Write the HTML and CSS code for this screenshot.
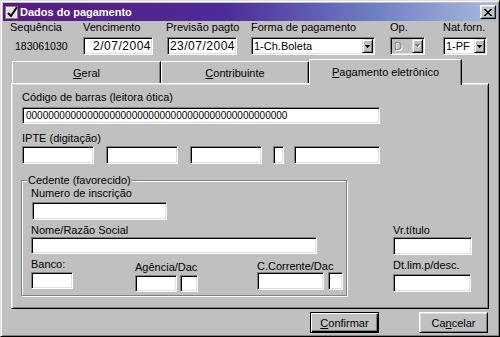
FILE: index.html
```html
<!DOCTYPE html>
<html lang="pt">
<head>
<meta charset="utf-8">
<title>Dados do pagamento</title>
<link rel="stylesheet" href="styles.css">
</head>
<body>
<div class="window">
  <div class="titlebar">
    <svg class="app-icon" viewBox="0 0 14 14" width="14" height="14"><rect x="0.5" y="1.5" width="12" height="12" fill="#fff" stroke="#808080"/><rect x="1.5" y="2.5" width="10" height="10" fill="#dfdfdf"/><path d="M3 8 L6 11 L12 2" stroke="#000" stroke-width="2" fill="none"/></svg>
    <span class="title">Dados do pagamento</span>
    <span class="close"><svg viewBox="0 0 8 7" width="8" height="7" shape-rendering="crispEdges"><path d="M0 0h2v1h-2z M6 0h2v1h-2z M1 1h2v1h-2z M5 1h2v1h-2z M2 2h4v1h-4z M3 3h2v1h-2z M2 4h4v1h-4z M1 5h2v1h-2z M5 5h2v1h-2z M0 6h2v1h-2z M6 6h2v1h-2z" fill="#000"/></svg></span>
  </div>

  <div class="header">
    <div class="hcol c-seq"><span class="lbl">Sequência</span><span class="seq">183061030</span></div>
    <div class="hcol c-venc"><span class="lbl">Vencimento</span><div class="edit date">2/07/2004</div></div>
    <div class="hcol c-prev"><span class="lbl lbl-prev">Previsão pagto</span><div class="edit date">23/07/2004</div></div>
    <div class="hcol c-forma"><span class="lbl">Forma de pagamento</span>
      <div class="combo"><span class="combo-text">1-Ch.Boleta</span><span class="drop"><svg viewBox="0 0 5 3" width="5" height="3" shape-rendering="crispEdges"><path d="M0 0h5v1h-5z M1 1h3v1h-3z M2 2h1v1h-1z" fill="#000"/></svg></span></div>
    </div>
    <div class="hcol c-op"><span class="lbl">Op.</span>
      <div class="combo disabled"><span class="combo-text">D</span><span class="drop"><svg viewBox="0 0 6 4" width="6" height="4" shape-rendering="crispEdges"><path d="M1 1h5v1h-5z M2 2h3v1h-3z M3 3h1v1h-1z" fill="#fff"/><path d="M0 0h5v1h-5z M1 1h3v1h-3z M2 2h1v1h-1z" fill="#808080"/></svg></span></div>
    </div>
    <div class="hcol c-nat"><span class="lbl">Nat.forn.</span>
      <div class="combo"><span class="combo-text">1-PF</span><span class="drop"><svg viewBox="0 0 5 3" width="5" height="3" shape-rendering="crispEdges"><path d="M0 0h5v1h-5z M1 1h3v1h-3z M2 2h1v1h-1z" fill="#000"/></svg></span></div>
    </div>
  </div>

  <div class="tabs">
    <div class="tab tab-1"><span><u>G</u>eral</span></div>
    <div class="tab tab-2"><span><u>C</u>ontribuinte</span></div>
    <div class="tab active"><span><u>P</u>agamento eletrônico</span></div>
  </div>

  <div class="panel">
    <span class="lbl lbl-code">Código de barras (leitora ótica)</span>
    <div class="edit barcode">00000000000000000000000000000000000000000000000</div>
    <span class="lbl lbl-ipte">IPTE (digitação)</span>
    <div class="ipte-row">
      <div class="edit h18 w72"></div>
      <div class="edit h18 w72 ml12"></div>
      <div class="edit h18 w72 ml12"></div>
      <div class="edit h18 w11 ml11"></div>
      <div class="edit h18 w86 ml10"></div>
    </div>

    <div class="lower">
      <div class="group">
        <span class="group-title">Cedente (favorecido)</span>
        <span class="lbl g-l1">Numero de inscrição</span>
        <div class="edit h18 w135 g-e1"></div>
        <span class="lbl g-l2">Nome/Razão Social</span>
        <div class="edit h17 w286"></div>
        <div class="brow">
          <div class="bcol banco">
            <span class="lbl">Banco:</span>
            <div class="edit h17 w42"></div>
          </div>
          <div class="bcol agencia">
            <span class="lbl">Agência/Dac</span>
            <div class="pair">
              <div class="edit h17 w42"></div>
              <div class="edit h17 w18"></div>
            </div>
          </div>
          <div class="bcol conta">
            <span class="lbl">C.Corrente/Dac</span>
            <div class="pair">
              <div class="edit h18 w67"></div>
              <div class="edit h18 w15"></div>
            </div>
          </div>
        </div>
      </div>

      <div class="right-col">
        <span class="lbl">Vr.título</span>
        <div class="edit h18 w79"></div>
        <span class="lbl r-l2">Dt.lim.p/desc.</span>
        <div class="edit h18 w78 r-e2"></div>
      </div>
    </div>
  </div>

  <div class="buttons">
    <div class="btn default"><span><u>C</u>onfirmar</span></div>
    <div class="btn"><span>Ca<u>n</u>celar</span></div>
  </div>
</div>
</body>
</html>
```
FILE: styles.css
```css
* { box-sizing: border-box; }
html, body { margin: 0; padding: 0; }
body {
  width: 500px;
  height: 337px;
  overflow: hidden;
  background: #c0c0c0;
  font-family: "Liberation Sans", Arial, sans-serif;
  font-size: 11px;
  color: #000;
}
u { text-decoration: underline; text-underline-offset: 1px; }

.window {
  width: 500px;
  height: 337px;
  background: #c0c0c0;
  border: 1px solid;
  border-color: #dfdfdf #000 #000 #dfdfdf;
  box-shadow: inset 1px 1px #fff, inset -1px -1px #808080;
  padding: 2px;
  display: flex;
  flex-direction: column;
}

/* title bar */
.titlebar {
  height: 18px;
  flex: none;
  display: flex;
  align-items: center;
  padding-left: 2px;
  padding-right: 1px;
  background: linear-gradient(90deg, #5a1a80 0%, #4c2c98 45%, #6e7ec4 75%, #a8badf 100%);
  color: #fff;
}
.app-icon { flex: none; margin-right: 1px; }
.title { flex: 1; font-weight: bold; font-size: 11px; white-space: nowrap; }
.close {
  width: 16px;
  height: 14px;
  flex: none;
  display: flex;
  align-items: center;
  justify-content: center;
  background: #c0c0c0;
  border: 1px solid;
  border-color: #fff #000 #000 #fff;
  box-shadow: inset 1px 1px #dfdfdf, inset -1px -1px #808080;
}

/* header fields */
.header {
  display: flex;
  height: 34px;
  flex: none;
  padding-left: 7px;
}
.hcol { display: flex; flex-direction: column; }
.lbl { display: block; height: 13px; line-height: 13px; white-space: nowrap; }
.c-seq { width: 73px; }
.c-venc { width: 70px; }
.c-prev { width: 70px; margin-left: 14px; }
.lbl-prev { margin-left: -1px; }
.c-forma { width: 124px; margin-left: 14px; }
.c-op { width: 35px; margin-left: 15px; }
.c-nat { width: 44px; margin-left: 18px; }
.seq {
  margin-top: 3px;
  height: 18px;
  line-height: 18px;
  padding-left: 5px;
  font-size: 10.5px;
}

.edit {
  display: flex;
  align-items: center;
  background: #fff;
  border: 1px solid;
  border-color: #808080 #fff #fff #808080;
  box-shadow: inset 1px 1px #000, inset -1px -1px #dfdfdf;
  white-space: nowrap;
  overflow: hidden;
}
.edit.date {
  margin-top: 3px;
  height: 18px;
  justify-content: flex-end;
  padding-right: 1px;
  font-size: 12px;
  letter-spacing: 0.5px;
}

.combo {
  margin-top: 3px;
  height: 18px;
  display: flex;
  align-items: center;
  padding: 1px;
  background: #fff;
  border: 1px solid;
  border-color: #808080 #fff #fff #808080;
  box-shadow: inset 1px 1px #000, inset -1px -1px #dfdfdf;
}
.combo-text { flex: 1; padding-left: 1px; font-size: 11px; white-space: nowrap; overflow: hidden; }
.drop {
  flex: none;
  width: 11px;
  height: 14px;
  display: flex;
  align-items: center;
  justify-content: center;
  background: #c0c0c0;
  border: 1px solid;
  border-color: #dfdfdf #000 #000 #dfdfdf;
  box-shadow: inset 1px 1px #fff, inset -1px -1px #808080;
}
.combo.disabled { background: #c0c0c0; }
.combo.disabled .combo-text { color: #808080; text-shadow: 1px 1px #fff; padding-left: 2px; }

/* tabs */
.tabs {
  display: flex;
  align-items: flex-end;
  height: 24px;
  flex: none;
  margin-top: 4px;
  padding-left: 9px;
}
.tab {
  height: 22px;
  display: flex;
  align-items: center;
  justify-content: center;
  border-top: 1px solid #fff;
  border-left: 1px solid #fff;
  border-right: 1px solid #000;
  box-shadow: inset -1px 0 #808080;
  white-space: nowrap;
}
.tab-1 { width: 149px; }
.tab-2 { width: 148px; }
.tab.active {
  width: 153px;
  height: 26px;
  margin-bottom: -2px;
  padding-bottom: 2px;
  position: relative;
  z-index: 2;
  background: #c0c0c0;
}

/* panel */
.panel {
  margin-left: 8px;
  width: 478px;
  height: 226px;
  flex: none;
  border: 1px solid;
  border-color: #fff #000 #000 #fff;
  box-shadow: inset 1px 1px #dfdfdf, inset -1px -1px #808080;
  padding-left: 10px;
  display: flex;
  flex-direction: column;
  align-items: flex-start;
}
.lbl-code { margin-top: 7px; }
.barcode {
  margin-top: 3px;
  width: 358px;
  height: 17px;
  padding-left: 3px;
  font-size: 10px;
}
.lbl-ipte { margin-top: 8px; }
.ipte-row { display: flex; margin-top: 1px; }

.h17 { height: 17px; }
.h18 { height: 18px; }
.w11 { width: 11px; }
.w15 { width: 15px; }
.w18 { width: 18px; }
.w42 { width: 42px; }
.w67 { width: 67px; }
.w72 { width: 72px; }
.w78 { width: 78px; }
.w79 { width: 79px; }
.w86 { width: 86px; }
.w135 { width: 135px; }
.w286 { width: 286px; }
.ml10 { margin-left: 10px; }
.ml11 { margin-left: 11px; }
.ml12 { margin-left: 12px; }

.lower { display: flex; align-items: flex-start; }
.group {
  position: relative;
  margin-top: 16px;
  margin-left: -1px;
  width: 326px;
  height: 116px;
  border: 1px solid #808080;
  box-shadow: inset 1px 1px #fff, 1px 1px #fff;
  padding-left: 9px;
  display: flex;
  flex-direction: column;
  align-items: flex-start;
}
.group-title {
  position: absolute;
  top: -7px;
  left: 5px;
  padding: 0 1px;
  line-height: 13px;
  background: #c0c0c0;
  white-space: nowrap;
}
.g-l1 { margin-top: 6px; }
.g-e1 { margin-top: 2px; margin-left: 1px; }
.g-l2 { margin-top: 4px; }
.brow { display: flex; align-items: flex-start; }
.bcol { display: flex; flex-direction: column; align-items: flex-start; }
.banco .lbl { margin-top: 4px; }
.banco .edit { margin-top: 1px; }
.agencia { margin-left: 62px; }
.agencia .lbl { margin-top: 7px; }
.agencia .pair { margin-top: 1px; gap: 3px; }
.conta { margin-left: 59px; }
.conta .lbl { margin-top: 6px; }
.conta .pair { margin-top: -1px; gap: 4px; }
.pair { display: flex; }

.right-col {
  margin-left: 46px;
  margin-top: 60px;
  display: flex;
  flex-direction: column;
  align-items: flex-start;
}
.r-l2 { margin-top: 4px; }
.r-e2 { margin-top: 2px; }

/* buttons */
.buttons {
  display: flex;
  justify-content: flex-end;
  gap: 40px;
  margin-top: 3px;
  padding-right: 9px;
}
.btn {
  width: 69px;
  height: 21px;
  display: flex;
  align-items: center;
  justify-content: center;
  border: 1px solid;
  border-color: #fff #000 #000 #fff;
  box-shadow: inset 1px 1px #dfdfdf, inset -1px -1px #808080;
  white-space: nowrap;
}
.btn.default {
  border-color: #000;
  box-shadow: inset 1px 1px #fff, inset -1px -1px #000, inset -2px -2px #808080;
}
```
